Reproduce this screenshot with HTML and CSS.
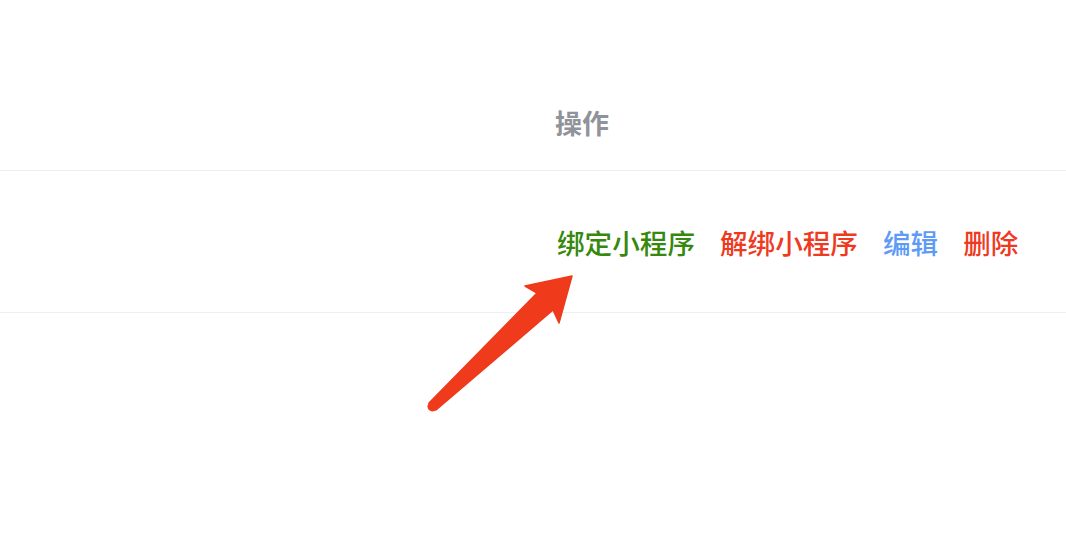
FILE: index.html
```html
<!DOCTYPE html>
<html lang="zh-CN">
<head>
<meta charset="utf-8">
<title>操作</title>
<link rel="stylesheet" href="styles.css">
</head>
<body>
<div class="table">
  <div class="row head">
    <div class="cell spacer"></div>
    <div class="cell ops"><span class="th">操作</span></div>
  </div>
  <div class="row body">
    <div class="cell spacer"></div>
    <div class="cell ops">
      <span class="act green">绑定小程序</span>
      <span class="act red">解绑小程序</span>
      <span class="act blue">编辑</span>
      <span class="act red">删除</span>
    </div>
  </div>
</div>
<svg class="arrow" width="1066" height="556" viewBox="0 0 1066 556">
  <path d="M429 403 L537 293 L525 286 L572 276 L559 323 L553 310 L436 410 Z" fill="#ef3a1c" stroke="#ef3a1c" stroke-width="1.5" stroke-linejoin="round"/>
  <circle cx="432.5" cy="406.5" r="5" fill="#ef3a1c"/>
</svg>
</body>
</html>
```
FILE: styles.css
```css
html, body {
  margin: 0;
  padding: 0;
  background: #ffffff;
  font-family: "Noto Sans CJK SC", "Noto Sans", sans-serif;
}
.table {
  width: 1066px;
}
.row {
  display: flex;
  border-bottom: 1px solid #ebeef5;
}
.head {
  height: 170px;
  align-items: flex-end;
}
.body {
  height: 141px;
  align-items: center;
}
.spacer {
  width: 555px;
}
.ops {
  display: flex;
  gap: 25px;
}
.head .ops {
  padding-bottom: 29px;
}
.body .ops {
  padding-left: 2px;
}
.th {
  font-size: 27px;
  font-weight: 700;
  color: #909399;
  line-height: 36px;
}
.act {
  font-size: 27.6px;
  font-weight: 500;
  line-height: 36px;
  white-space: nowrap;
}
.green { color: #36880e; }
.red { color: #ee3a1f; }
.blue { color: #5e9bf6; }
.arrow {
  position: absolute;
  left: 0;
  top: 0;
  pointer-events: none;
}
```
